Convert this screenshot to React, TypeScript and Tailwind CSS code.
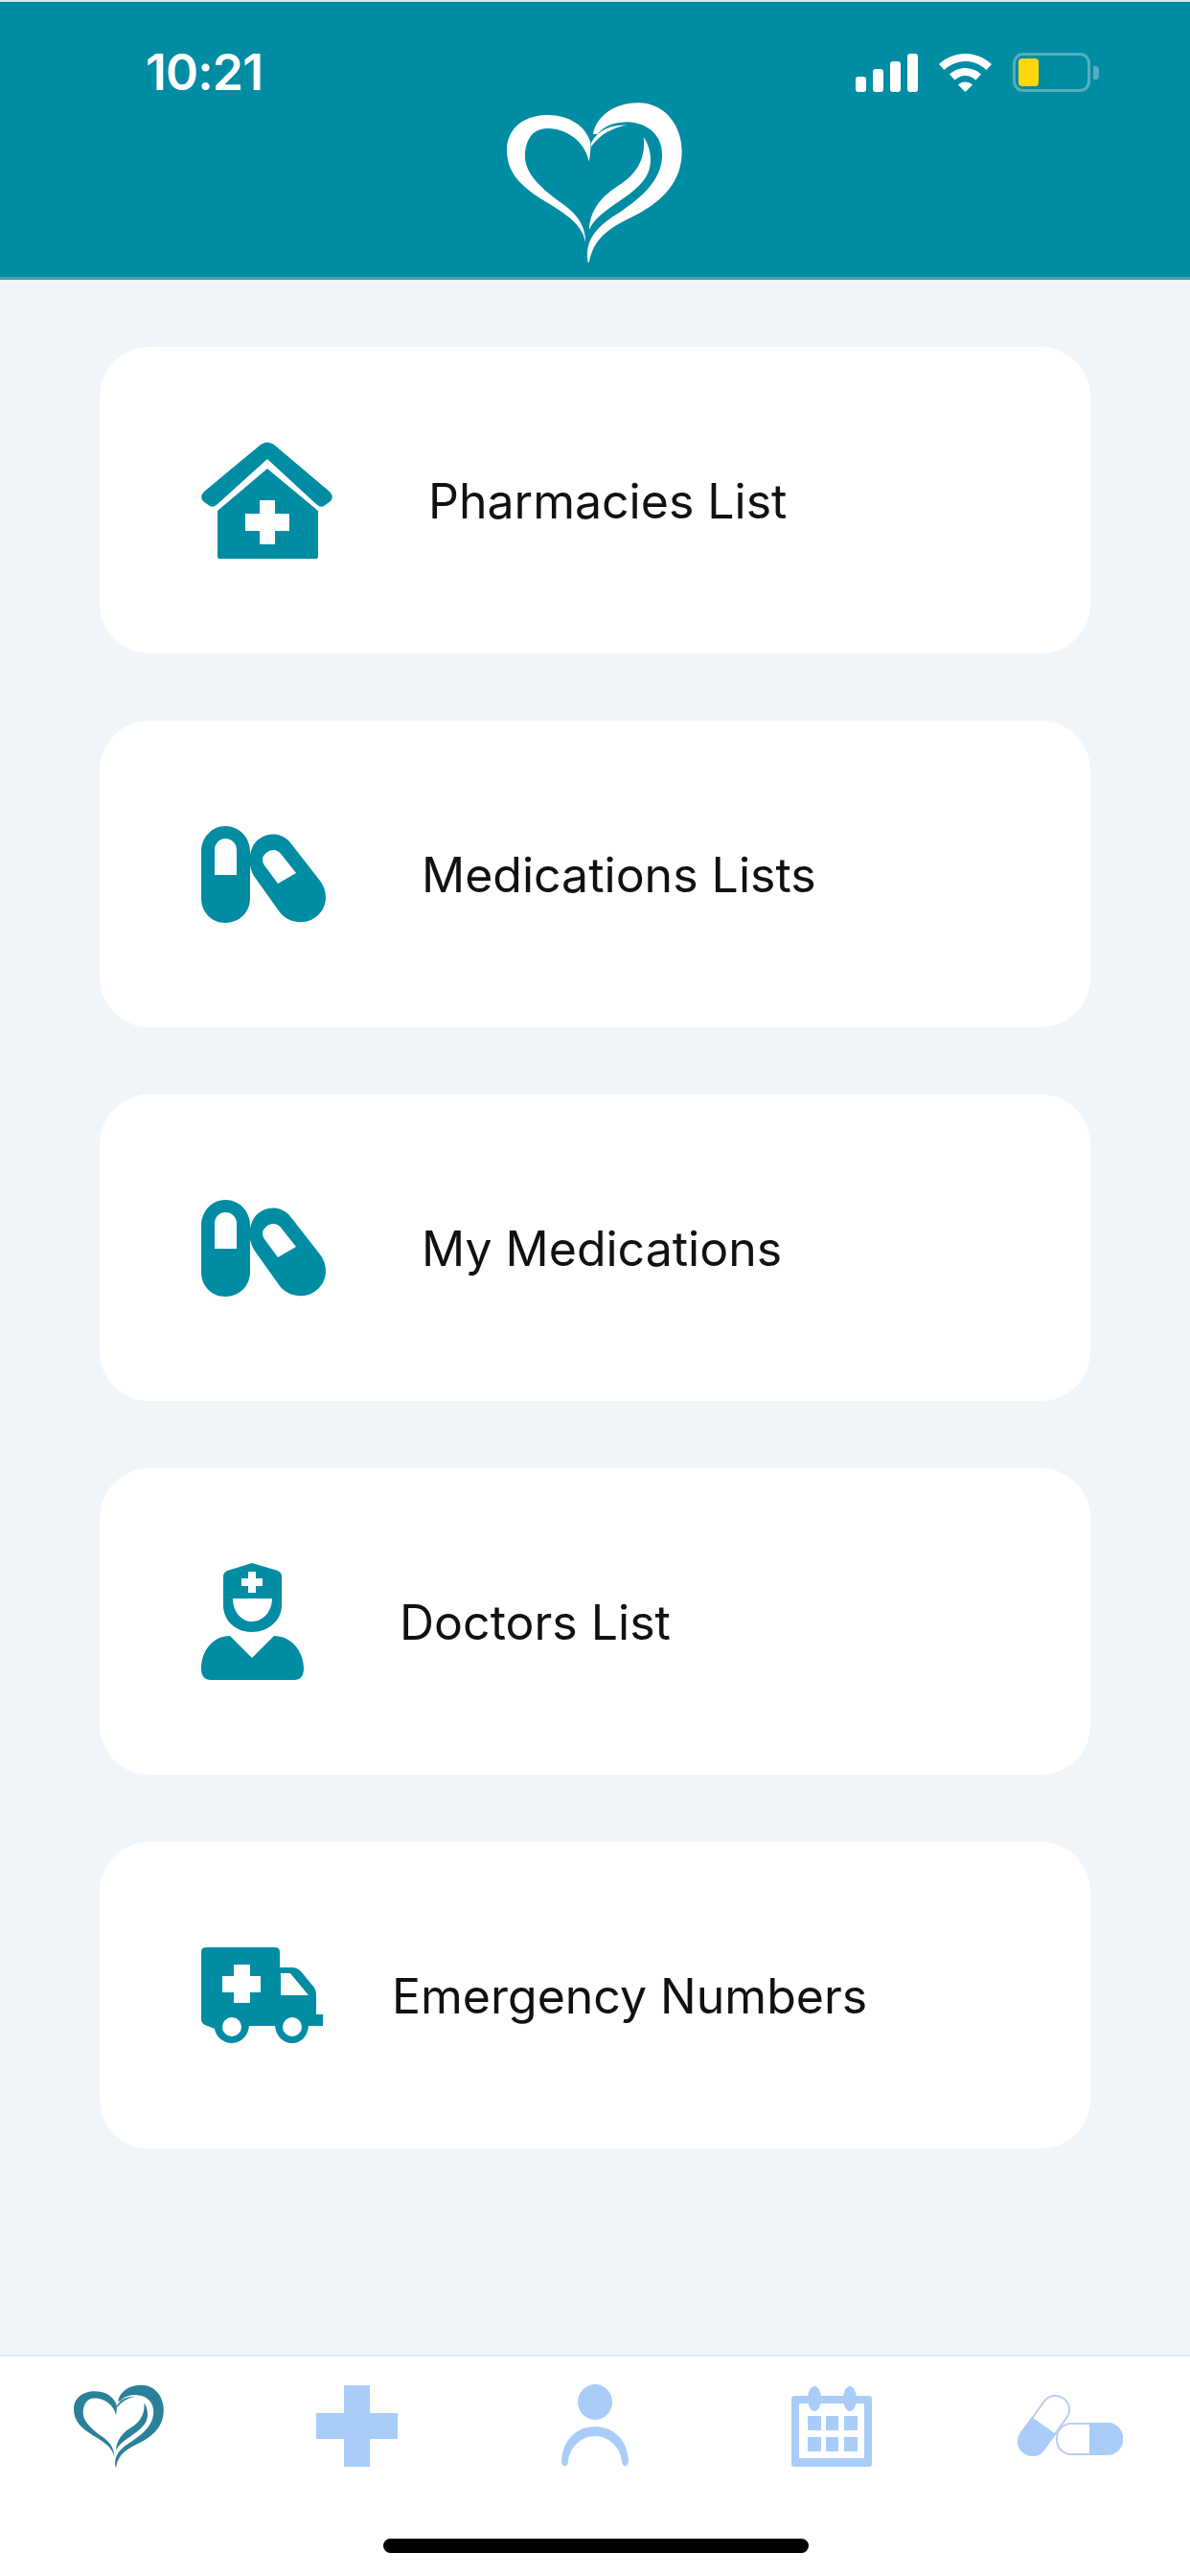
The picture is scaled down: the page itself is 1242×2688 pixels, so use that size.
// App.tsx
const teal = "#008ca3";
const soft = "#a9cdf8";

function HeartLogo({ className, color }: { className: string; color: string }) {
  return (
    <svg viewBox="88 52 550 500" className={className} fill={color}>
      {/* left lobe */}
      <path d="M335 490 C325 440 290 410 215 365 C130 315 88 270 88 200 C88 130 145 90 215 90 C285 90 335 125 350 175 C352 195 350 215 345 237 C340 190 290 132 215 132 C165 132 145 175 145 220 C145 275 200 325 265 370 C315 405 335 445 335 490 Z" />
      {/* right band, ends in the stem */}
      <path d="M342 552 C332 490 360 445 440 397 C500 355 575 300 575 215 C575 160 540 118 470 112 C430 112 395 122 372 150 L358 150 C370 90 430 52 500 52 C585 52 637 125 637 205 C637 295 580 360 490 405 C420 440 360 470 346 552 Z" />
      {/* flick at the notch */}
      <path d="M352 178 C375 135 420 120 465 122 C425 130 385 145 352 190 Z" />
      {/* inner leaf */}
      <path d="M346 450 C350 385 385 345 440 310 C490 280 525 230 517 160 C535 185 545 225 535 260 C520 310 470 340 420 375 C385 400 360 420 346 450 Z" />
    </svg>
  );
}

function HouseIcon() {
  return (
    <svg viewBox="0 0 137 122" className="w-[137px] h-[122px]" fill={teal}>
      <path d="M62 3 Q69 -2 76 3 L134 52 Q139 57 135 62 L128 67 Q124 69 120 65 L69 18 L17 65 Q13 69 9 67 L2 62 Q-2 57 3 52 Z" />
      <path fillRule="evenodd" d="M69 28 L122 72 L122 120 Q122 122 120 122 L19 122 Q17 122 17 120 L17 72 Z M61 61 L61 75 L46 75 L46 93 L61 93 L61 107 L77 107 L77 93 L92 93 L92 75 L77 75 L77 61 Z" />
    </svg>
  );
}

function PillsIcon() {
  return (
    <svg viewBox="0 0 130 101" className="w-[130px] h-[101px]" fill={teal}>
      <path fillRule="evenodd" d="M25 0 C40 0 51 12 51 27 L51 75 C51 90 40 101 25 101 C11 101 0 90 0 75 L0 27 C0 12 11 0 25 0 Z M25 13 C19 13 14 18 14 25 L14 51 L37 51 L37 25 C37 18 32 13 25 13 Z" />
      <path fillRule="evenodd" d="M55 19 C64 6 82 5 92 16 L124 57 C134 70 131 88 118 96 C106 104 90 100 82 90 L55 52 C49 42 49 29 55 19 Z M66 30 C63 33 64 38 66 41 L80 60 L99 49 L84 30 C79 23 71 24 66 30 Z" />
    </svg>
  );
}

function DoctorIcon() {
  return (
    <svg viewBox="0 0 107 122" className="w-[107px] h-[122px]" fill={teal}>
      <path fillRule="evenodd" d="M53 0 L80 8 Q84 10 84 14 L84 44 C84 60 70 72 53 72 C36 72 23 60 23 44 L23 14 Q23 10 27 8 Z M33 37 C33 50 41 61 53 61 C65 61 74 50 74 37 Z M49 9 L49 16 L42 16 L42 24 L49 24 L49 31 L57 31 L57 24 L64 24 L64 16 L57 16 L57 9 Z" />
      <path d="M30 76 L53 99 L76 76 C94 76 107 92 107 110 Q107 122 97 122 L10 122 Q0 122 0 110 C0 92 12 76 30 76 Z" />
    </svg>
  );
}

function AmbulanceIcon() {
  return (
    <svg viewBox="0 0 127 100" className="w-[127px] h-[100px]" fill={teal}>
      <path fillRule="evenodd" d="M5 0 L77 0 Q82 0 82 5 L82 21 L95 21 Q100 21 104 25 L118 42 Q120 45 120 50 L120 70 L127 70 L127 82 L112 82 C111 93 104 100 95 100 C86 100 78 93 77 82 L50 82 C49 93 41 100 32 100 C23 100 15 93 14 85 L4 81 Q0 79 0 75 L0 5 Q0 0 5 0 Z M83 27 L83 50 L112 50 L93 27 Z M34 18 L34 30 L22 30 L22 47 L34 47 L34 58 L51 58 L51 47 L62 47 L62 30 L51 30 L51 18 Z M32 73 A10 10 0 1 0 32 93 A10 10 0 1 0 32 73 Z M95 73 A10 10 0 1 0 95 93 A10 10 0 1 0 95 73 Z" />
    </svg>
  );
}

function PlusTab() {
  return (
    <svg viewBox="0 0 85 85" className="w-[85px] h-[85px]" fill={soft}>
      <path d="M29 0 H56 V29 H85 V56 H56 V85 H29 V56 H0 V29 H29 Z" />
    </svg>
  );
}

function PersonTab() {
  return (
    <svg viewBox="0 0 72 86" className="w-[72px] h-[86px]" fill={soft}>
      <ellipse cx="36" cy="18.5" rx="18" ry="18.5" />
      <path d="M1 80 C2 58 17 44 36 44 C55 44 70 58 71 80 C71 87 64 87 64 80 C62 65 50 54 36 54 C22 54 10 65 8 80 C8 87 1 87 1 80 Z" />
    </svg>
  );
}

function CalendarTab() {
  return (
    <svg viewBox="0 0 84 85" className="w-[84px] h-[85px]" fill={soft}>
      <path fillRule="evenodd" d="M3 11 H81 Q84 11 84 14 V82 Q84 85 81 85 H3 Q0 85 0 82 V14 Q0 11 3 11 Z M8 19 V76 H76 V19 Z" />
      <ellipse cx="24" cy="14" rx="7" ry="13" />
      <ellipse cx="61" cy="14" rx="7" ry="13" />
      <rect x="17" y="32" width="14" height="15" />
      <rect x="36" y="32" width="13" height="15" />
      <rect x="55" y="32" width="14" height="15" />
      <rect x="17" y="54" width="14" height="15" />
      <rect x="36" y="54" width="13" height="15" />
      <rect x="55" y="54" width="14" height="15" />
    </svg>
  );
}

function PillsTab() {
  return (
    <svg viewBox="0 0 112 67" className="w-[112px] h-[67px]">
      <rect x="42" y="31" width="68" height="32" rx="15" fill="#ffffff" stroke="#b9cdee" strokeWidth="2" />
      <path d="M76 30 H95 A16 16.5 0 0 1 95 63 H76 Z" fill={soft} />
      <g transform="rotate(36 28.5 33)">
        <rect x="14" y="-2" width="29" height="70" rx="14.5" fill="#ffffff" stroke="#b9cdee" strokeWidth="2" />
        <path d="M13 33 H44 V53 A15.5 15.5 0 0 1 13 53 Z" fill={soft} />
      </g>
    </svg>
  );
}

const rows = [
  { label: "Pharmacies List", icon: <HouseIcon />, gap: "ml-[100px]" },
  { label: "Medications Lists", icon: <PillsIcon />, gap: "ml-[100px]" },
  { label: "My Medications", icon: <PillsIcon />, gap: "ml-[100px]" },
  { label: "Doctors List", icon: <DoctorIcon />, gap: "ml-[100px]" },
  { label: "Emergency Numbers", icon: <AmbulanceIcon />, gap: "ml-[72px]" },
];

export default function App() {
  return (
    <div className="w-[1242px] h-[2688px] flex flex-col bg-[#f0f5fa] font-['Inter',sans-serif]">
      {/* HEADER */}
      <header className="h-[292px] shrink-0 bg-[#008ca3] border-t-2 border-b-[3px] border-t-[#d5ebef] border-b-[#4c9fb0] pt-[53px]">
        <div className="h-[41px] flex items-center justify-between pl-[152px] pr-[95px]">
          <span className="text-[52px] leading-none font-semibold text-white tracking-[-1px]">10:21</span>
          <div className="flex items-center gap-[22px]">
            <div className="flex items-end gap-[7px] h-[40px]">
              <div className="w-[11px] h-[16px] rounded-[3px] bg-white"></div>
              <div className="w-[11px] h-[24px] rounded-[3px] bg-white"></div>
              <div className="w-[11px] h-[32px] rounded-[3px] bg-white"></div>
              <div className="w-[11px] h-[40px] rounded-[3px] bg-white"></div>
            </div>
            <svg viewBox="0 0 55 40" className="w-[55px] h-[40px]" fill="white">
              <path d="M27.5 0 C38 0 47.5 4 55 11 L49.5 17 C43.5 11.5 36 8 27.5 8 C19 8 11.5 11.5 5.5 17 L0 11 C7.5 4 17 0 27.5 0 Z" />
              <path d="M27.5 15 C34 15 39.5 17.5 44 21.5 L38.5 27.5 C35.5 25 32 23 27.5 23 C23 23 19.5 25 16.5 27.5 L11 21.5 C15.5 17.5 21 15 27.5 15 Z" />
              <path d="M27.5 29.5 C30.5 29.5 33 30.5 35 32.5 L27.5 40 L20 32.5 C22 30.5 24.5 29.5 27.5 29.5 Z" />
            </svg>
            <div className="flex items-center gap-[3px]">
              <div className="w-[81px] h-[41px] rounded-[11px] border-[3px] border-[#56aebd] p-[3px]">
                <div className="w-[21px] h-full rounded-[4px] bg-[#ffd60a]"></div>
              </div>
              <div className="w-[6px] h-[14px] rounded-r-[4px] bg-[#56aebd]"></div>
            </div>
          </div>
        </div>
        <HeartLogo className="block w-[183px] h-[167px] ml-[529px] mt-[11px]" color="#ffffff" />
      </header>

      {/* MENU */}
      <main className="flex-1 flex flex-col gap-[70px] px-[104px] pt-[70px]">
        {rows.map((row) => (
          <div key={row.label} className="h-[320px] rounded-[52px] bg-white flex items-center pl-[106px]">
            {row.icon}
            <span className={`${row.gap} mt-[2px] text-[50px] leading-none text-[#111111]`}>{row.label}</span>
          </div>
        ))}
      </main>

      {/* TAB BAR */}
      <footer className="h-[231px] shrink-0 bg-white border-t-2 border-[#e5e9ef] relative">
        <div className="flex items-center h-[88px] mt-[28px] pl-[77px]">
          <HeartLogo className="w-[94px] h-[87px]" color="#2a8199" />
          <div className="ml-[159px]"><PlusTab /></div>
          <div className="ml-[170px]"><PersonTab /></div>
          <div className="ml-[169px]"><CalendarTab /></div>
          <div className="ml-[151px]"><PillsTab /></div>
        </div>
        <div className="absolute left-[400px] top-[190px] w-[444px] h-[15px] rounded-full bg-black"></div>
      </footer>
    </div>
  );
}
